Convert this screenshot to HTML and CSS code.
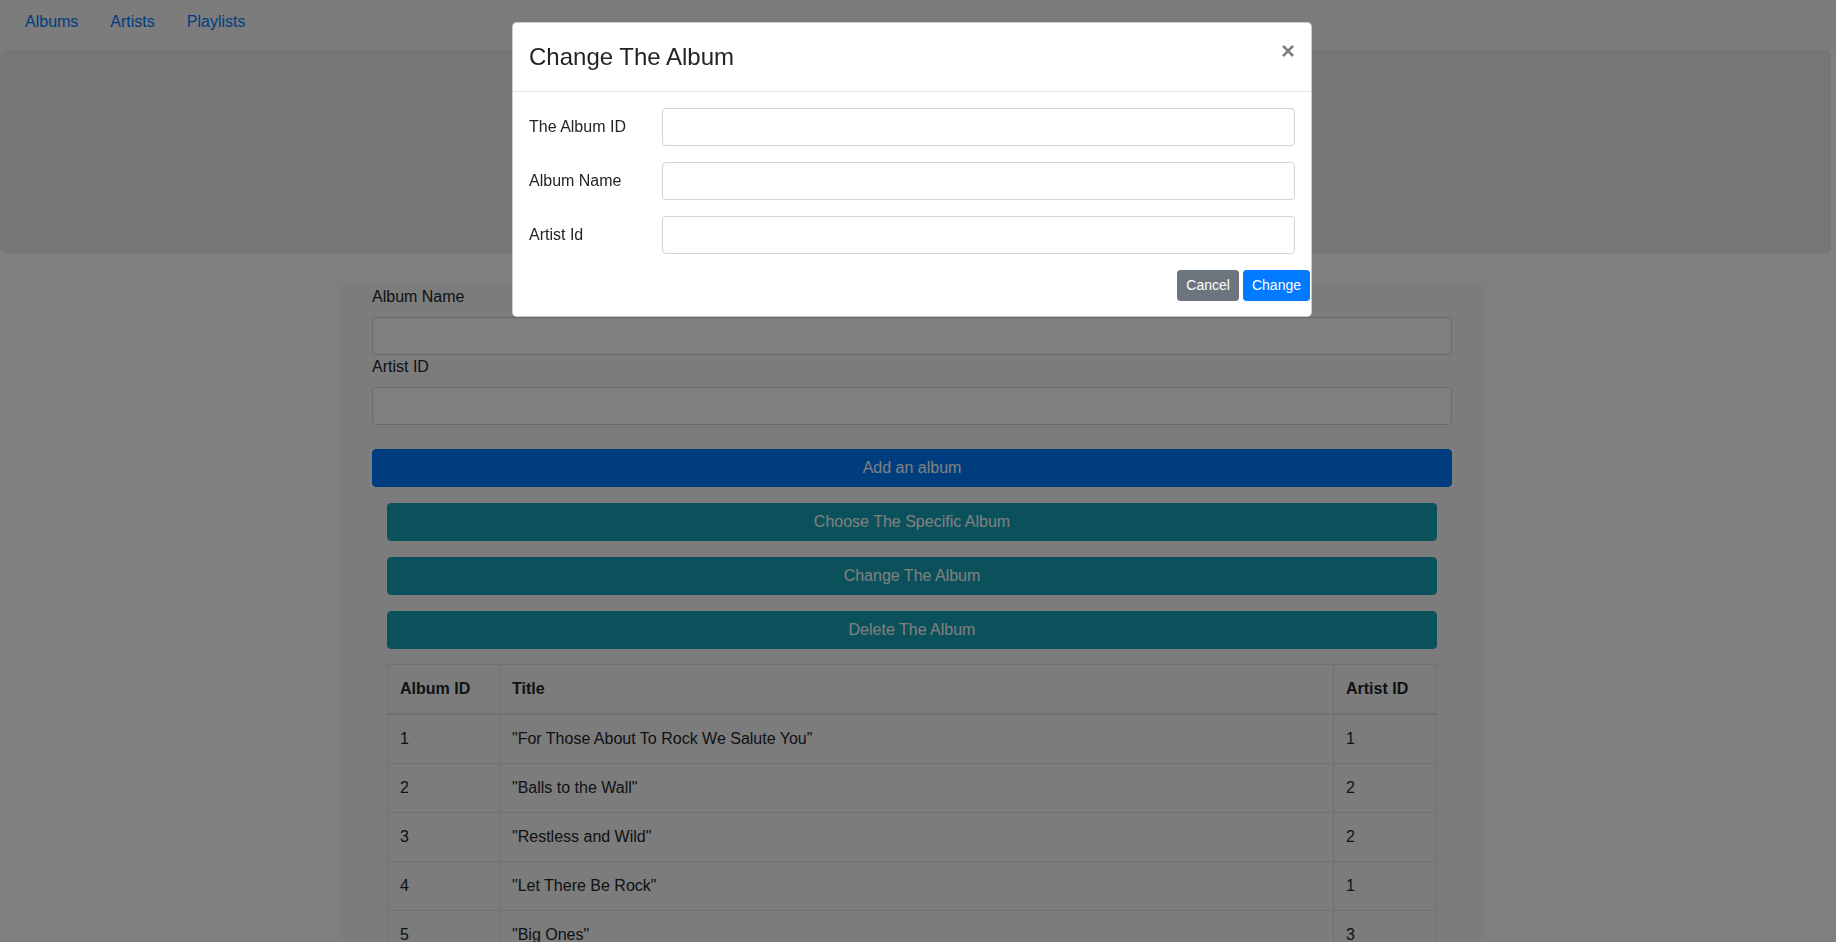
FILE: index.html
```html
<!DOCTYPE html>
<html lang="en">
<head>
<meta charset="utf-8">
<title>Albums</title>
<link rel="stylesheet" href="styles.css">
</head>
<body>
<div class="page">
  <nav class="topnav">
    <a class="nav-link" href="#">Albums</a>
    <a class="nav-link" href="#">Artists</a>
    <a class="nav-link" href="#">Playlists</a>
  </nav>
  <div class="jumbotron"></div>
  <div class="main-wrap">
    <main class="container">
      <label class="lbl">Album Name</label>
      <input class="form-control" type="text">
      <label class="lbl">Artist ID</label>
      <input class="form-control" type="text">
      <button class="btn btn-primary btn-block add-btn">Add an album</button>
      <div class="inner">
        <button class="btn btn-info btn-block">Choose The Specific Album</button>
        <button class="btn btn-info btn-block">Change The Album</button>
        <button class="btn btn-info btn-block last">Delete The Album</button>
        <table class="table">
          <colgroup>
            <col class="c1">
            <col class="c2">
            <col class="c3">
          </colgroup>
          <thead>
            <tr><th>Album ID</th><th>Title</th><th>Artist ID</th></tr>
          </thead>
          <tbody>
            <tr><td>1</td><td>"For Those About To Rock We Salute You"</td><td>1</td></tr>
            <tr><td>2</td><td>"Balls to the Wall"</td><td>2</td></tr>
            <tr><td>3</td><td>"Restless and Wild"</td><td>2</td></tr>
            <tr><td>4</td><td>"Let There Be Rock"</td><td>1</td></tr>
            <tr><td>5</td><td>"Big Ones"</td><td>3</td></tr>
            <tr><td>6</td><td>"Jagged Little Pill"</td><td>4</td></tr>
          </tbody>
        </table>
      </div>
    </main>
  </div>
</div>

<div class="backdrop"></div>

<div class="modal">
  <div class="modal-dialog">
    <div class="modal-content">
      <div class="modal-header">
        <h5 class="modal-title">Change The Album</h5>
        <button class="close" type="button">&times;</button>
      </div>
      <div class="modal-body">
        <div class="form-row">
          <label class="col-label">The Album ID</label>
          <div class="col-field"><input class="form-control" type="text"></div>
        </div>
        <div class="form-row">
          <label class="col-label">Album Name</label>
          <div class="col-field"><input class="form-control" type="text"></div>
        </div>
        <div class="form-row">
          <label class="col-label">Artist Id</label>
          <div class="col-field"><input class="form-control" type="text"></div>
        </div>
        <div class="actions">
          <button class="btn btn-sm btn-secondary" type="button">Cancel</button>
          <button class="btn btn-sm btn-primary" type="button">Change</button>
        </div>
      </div>
    </div>
  </div>
</div>
</body>
</html>
```

FILE: styles.css
```css
*, *::before, *::after { box-sizing: border-box; }

html, body {
  margin: 0;
  height: 100%;
  overflow: hidden;
}

body {
  font-family: "Liberation Sans", Arial, sans-serif;
  font-size: 16px;
  line-height: 1.5;
  color: #212529;
  background: #fff;
}

.page { width: 100%; }

/* top navigation */
.topnav {
  display: flex;
  height: 50px;
  padding: 2px 0 0 9px;
  background: #f8f9fa;
}
.nav-link {
  display: block;
  padding: 8px 16px;
  color: #007bff;
  text-decoration: none;
}

.jumbotron {
  height: 203px;
  margin: 0 5px 32px 0;
  background: #e9ecef;
  border-radius: 4.8px;
}

.main-wrap { padding-right: 12px; }

.container {
  width: 1140px;
  margin: 0 auto;
  padding: 0 30px 40px;
  background: #f8f9fa;
  min-height: 700px;
}

.lbl {
  display: block;
  margin-bottom: 8px;
}

.form-control {
  display: block;
  width: 100%;
  height: 38px;
  padding: 6px 12px;
  font: inherit;
  color: #495057;
  background: #fff;
  border: 1px solid #ced4da;
  border-radius: 4px;
}

.btn {
  display: inline-block;
  font-family: inherit;
  font-size: 16px;
  line-height: 1.5;
  padding: 6px 12px;
  border: 1px solid transparent;
  border-radius: 4px;
  color: #fff;
  text-align: center;
  cursor: pointer;
}
.btn-block {
  display: block;
  width: 100%;
}
.btn-primary { background: #007bff; border-color: #007bff; }
.btn-info { background: #17a2b8; border-color: #17a2b8; }
.btn-secondary { background: #6c757d; border-color: #6c757d; }
.btn-sm {
  padding: 4px 8px;
  font-size: 14px;
  border-radius: 3.2px;
}

.add-btn { margin-top: 24px; }

.inner {
  padding: 0 15px;
  margin-top: 16px;
}
.inner .btn-info { margin-bottom: 16px; }
.inner .btn-info.last { margin-bottom: 15px; }

.table {
  width: 100%;
  border-collapse: collapse;
  table-layout: fixed;
  color: #212529;
}
.c1 { width: 112px; }
.c3 { width: 103px; }
.table th,
.table td {
  padding: 12px;
  border: 1px solid #dee2e6;
  text-align: left;
  vertical-align: top;
}
.table thead th {
  vertical-align: bottom;
  border-bottom: 2px solid #dee2e6;
  font-weight: 700;
}

/* modal */
.backdrop {
  position: fixed;
  inset: 0;
  background: #000;
  opacity: 0.5;
  z-index: 10;
}

.modal {
  position: fixed;
  inset: 0;
  z-index: 20;
  padding-right: 12px;
}
.modal-dialog {
  width: 800px;
  margin: 22px auto 0;
}
.modal-content {
  background: #fff;
  border: 1px solid rgba(0, 0, 0, 0.2);
  border-radius: 4.8px;
}
.modal-header {
  display: flex;
  align-items: flex-start;
  justify-content: space-between;
  padding: 16px;
  border-bottom: 1px solid #dee2e6;
}
.modal-title {
  margin: 0;
  font-size: 24px;
  font-weight: 500;
  line-height: 1.5;
}
.close {
  padding: 16px;
  margin: -16px -16px -16px auto;
  background: transparent;
  border: 0;
  font-family: inherit;
  font-size: 24px;
  font-weight: 700;
  line-height: 1;
  color: #000;
  opacity: 0.5;
  text-shadow: 0 1px 0 #fff;
}

.modal-body { padding: 16px 16px 15px; }

.form-row {
  display: flex;
  margin: 0 -15px 16px;
}
.col-label {
  flex: 0 0 16.6667%;
  padding: 7px 15px;
  line-height: 1.5;
}
.col-field {
  flex: 0 0 83.3333%;
  padding: 0 15px;
}

.actions {
  display: flex;
  justify-content: flex-end;
  gap: 4px;
  margin-right: -15px;
}
```
